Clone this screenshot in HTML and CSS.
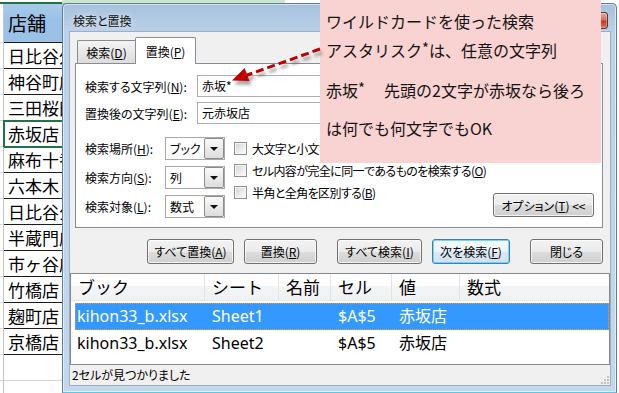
FILE: index.html
```html
<!DOCTYPE html>
<html lang="ja">
<head>
<meta charset="utf-8">
<title>検索と置換</title>
<link rel="stylesheet" href="styles.css">
</head>
<body>
<div class="sheet">
  <div class="sheet-top"><div class="st-a"></div><div class="st-b"></div></div>
  <div class="row head-row"><div class="stub"></div><div class="cell head">店舗</div></div>
  <div class="row"><div class="stub"></div><div class="cell">日比谷外堀店</div></div>
  <div class="row"><div class="stub"></div><div class="cell">神谷町店</div></div>
  <div class="row"><div class="stub"></div><div class="cell">三田桜田店</div></div>
  <div class="row"><div class="stub"></div><div class="cell sel">赤坂店</div></div>
  <div class="row"><div class="stub"></div><div class="cell">麻布十番店</div></div>
  <div class="row"><div class="stub"></div><div class="cell">六本木ヒルズ店</div></div>
  <div class="row"><div class="stub"></div><div class="cell">日比谷公園店</div></div>
  <div class="row"><div class="stub"></div><div class="cell">半蔵門店</div></div>
  <div class="row"><div class="stub"></div><div class="cell">市ヶ谷店</div></div>
  <div class="row"><div class="stub"></div><div class="cell">竹橋店</div></div>
  <div class="row"><div class="stub"></div><div class="cell">麹町店</div></div>
  <div class="row"><div class="stub"></div><div class="cell">京橋店</div></div>
  <div class="row"><div class="stub"></div><div class="cell empty"></div></div>
  <div class="row"><div class="stub"></div><div class="cell empty"></div></div>
</div>

<div class="dialog">
  <div class="titlebar"><span class="title">検索と置換</span><span class="close-btn"></span></div>
  <div class="client">
    <div class="tabs">
      <div class="tab">検索(<u>D</u>)</div>
      <div class="tab active">置換(<u>P</u>)</div>
    </div>
    <div class="panel">
      <div class="field"><span class="flabel">検索する文字列(<u>N</u>):</span><div class="input">赤坂*</div></div>
      <div class="field second"><span class="flabel">置換後の文字列(<u>E</u>):</span><div class="input">元赤坂店</div></div>
      <div class="opts">
        <div class="opt-col">
          <div class="opt-row"><span class="olabel">検索場所(<u>H</u>):</span><div class="select"><span class="sel-text">ブック</span><span class="sel-btn"><span class="tri"></span></span></div></div>
          <div class="opt-row"><span class="olabel">検索方向(<u>S</u>):</span><div class="select"><span class="sel-text">列</span><span class="sel-btn"><span class="tri"></span></span></div></div>
          <div class="opt-row"><span class="olabel">検索対象(<u>L</u>):</span><div class="select"><span class="sel-text">数式</span><span class="sel-btn"><span class="tri"></span></span></div></div>
        </div>
        <div class="chk-col">
          <div class="chk-row"><span class="chk"></span><span class="chk-label">大文字と小文字を区別する(<u>C</u>)</span></div>
          <div class="chk-row"><span class="chk"></span><span class="chk-label">セル内容が完全に同一であるものを検索する(<u>O</u>)</span></div>
          <div class="chk-row"><span class="chk"></span><span class="chk-label">半角と全角を区別する(<u>B</u>)</span></div>
        </div>
        <div class="btn opt-btn"><span>オプション(<u>T</u>) &lt;&lt;</span></div>
      </div>
    </div>
    <div class="btnrow">
      <div class="grp"><div class="btn w-repall"><span>すべて置換(<u>A</u>)</span></div><div class="btn w-rep"><span>置換(<u>R</u>)</span></div></div>
      <div class="grp"><div class="btn w-findall"><span>すべて検索(<u>I</u>)</span></div><div class="btn focus w-next"><span>次を検索(<u>F</u>)</span></div></div>
      <div class="btn w-close"><span>閉じる</span></div>
    </div>
    <div class="list">
      <div class="lv-head">
        <div class="hc">ブック</div><div class="hc">シート</div><div class="hc">名前</div><div class="hc">セル</div><div class="hc">値</div><div class="hc last">数式</div>
      </div>
      <div class="lv-row selected">
        <div class="c c1">kihon33_b.xlsx</div><div class="c">Sheet1</div><div class="c"></div><div class="c">$A$5</div><div class="c">赤坂店</div><div class="c"></div>
      </div>
      <div class="lv-row">
        <div class="c c1">kihon33_b.xlsx</div><div class="c">Sheet2</div><div class="c"></div><div class="c">$A$5</div><div class="c">赤坂店</div><div class="c"></div>
      </div>
    </div>
    <div class="status">2セルが見つかりました
      <svg class="grip" width="9" height="9" viewBox="0 0 9 9">
        <rect x="7" y="1" width="2" height="2" fill="#c2c2c2"/>
        <rect x="4" y="4" width="2" height="2" fill="#c2c2c2"/>
        <rect x="7" y="4" width="2" height="2" fill="#c2c2c2"/>
        <rect x="1" y="7" width="2" height="2" fill="#c2c2c2"/>
        <rect x="4" y="7" width="2" height="2" fill="#c2c2c2"/>
        <rect x="7" y="7" width="2" height="2" fill="#c2c2c2"/>
      </svg>
    </div>
  </div>
</div>

<div class="callout">
  <div class="cl">ワイルドカードを使った検索</div>
  <div class="cl">アスタリスク<span class="sup">*</span>は、任意の文字列</div>
  <div class="cl l3">赤坂<span class="sup">*</span><span class="gap">先頭の2文字が赤坂なら後ろ</span></div>
  <div class="cl l4">は何でも何文字でもOK</div>
</div>

<svg class="arrow" width="619" height="393" viewBox="0 0 619 393">
  <defs>
    <filter id="sh" x="-30%" y="-30%" width="160%" height="160%"><feGaussianBlur stdDeviation="1.6"/></filter>
  </defs>
  <g filter="url(#sh)" opacity="0.5" transform="translate(2,4)">
    <line x1="320" y1="49" x2="246" y2="75.5" stroke="#555" stroke-width="3" stroke-dasharray="8 4"/>
    <polygon points="232,80.5 244.6,67.9 249.4,81.1" fill="#555"/>
  </g>
  <line x1="320" y1="49" x2="246" y2="75.5" stroke="#c00000" stroke-width="3" stroke-dasharray="8 4"/>
  <polygon points="232,80.5 244.6,67.9 249.4,81.1" fill="#c00000"/>
</svg>
</body>
</html>
```

FILE: styles.css
```css
* { box-sizing: border-box; }
html, body { margin: 0; padding: 0; }
body {
  width: 619px;
  height: 393px;
  overflow: hidden;
  position: relative;
  background: #ffffff;
  font-family: "Noto Sans CJK JP", sans-serif;
  color: #000;
}

/* ---------- spreadsheet behind ---------- */
.sheet { display: flex; flex-direction: column; }
.sheet-top { display: flex; height: 4px; }
.st-a { width: 62px; border-bottom: 2px solid #217346; }
.st-b { width: 223px; background: #cbe7cb; border-bottom: 1px solid #a9a9a9; }
.row { display: flex; height: 26px; }
.row.head-row { height: 39px; }
.stub { width: 4px; border-right: 1px solid #c6c6c6; border-bottom: 1px solid #d4d4d4; }
.cell {
  width: 90px;
  border-bottom: 1px solid #1c1c1c;
  font-size: 17px;
  line-height: 25px;
  padding-left: 4px;
  white-space: nowrap;
  overflow: hidden;
}
.cell.head {
  background: linear-gradient(#a9cbea, #9bc2e6 40%, #9bc2e6);
  font-size: 19px;
  line-height: 38px;
}
.cell.sel { outline: 2px solid #217346; outline-offset: -1px; }
.cell.empty { border-bottom-color: #d4d4d4; }

/* ---------- dialog window ---------- */
.dialog {
  position: absolute;
  left: 62px;
  top: 3px;
  width: 555px;
  height: 390px;
  border: 1px solid #5f7c9c;
  border-bottom: 1px solid #5cc6e6;
  border-radius: 5px 5px 0 0;
  background: linear-gradient(#a7c1dd, #bcd2e9 30px, #bfd4ea 200px, #c4d8ec);
  box-shadow: inset 0 0 0 1px rgba(255, 255, 255, 0.55);
  padding: 0 6px 7px 7px;
  display: flex;
  flex-direction: column;
  font-feature-settings: "palt";
  font-size: 12px;
}
.titlebar {
  position: relative;
  height: 28px;
  display: flex;
  align-items: center;
  padding: 5px 0 0 3px;
}
.title { font-size: 12px; color: #111; text-shadow: 0 0 6px rgba(255,255,255,0.9); }
.close-btn {
  position: absolute;
  top: 8px;
  right: 2px;
  width: 43px;
  height: 17px;
  border: 1px solid #6b2a24;
  border-radius: 3px;
  background: linear-gradient(#e7a99c, #d4705f 45%, #c0392b 55%, #d6745f);
  box-shadow: inset 0 0 0 1px rgba(255,255,255,0.35);
}

.client {
  height: 353px;
  background: #f0f0f0;
  box-shadow: 0 0 0 1px #9aaec4;
  display: flex;
  flex-direction: column;
}

.tabs {
  display: flex;
  align-items: flex-end;
  height: 26px;
  margin-top: 5px;
  padding-left: 7px;
}
.tab {
  width: 58px;
  height: 23px;
  border: 1px solid #898c95;
  border-bottom: none;
  border-right: none;
  border-radius: 2px 0 0 0;
  background: linear-gradient(#f4f4f4, #e8e8e8 50%, #dcdcdc);
  display: flex;
  align-items: center;
  justify-content: center;
}
.tab.active {
  width: 61px;
  height: 27px;
  margin-bottom: -1px;
  border-right: 1px solid #898c95;
  border-radius: 2px 2px 0 0;
  background: #ffffff;
  position: relative;
  z-index: 2;
}

.panel {
  margin-left: 5px;
  width: 528px;
  height: 165px;
  border: 1px solid #898c95;
  background: #ffffff;
  padding: 11px 0 0 9px;
  display: flex;
  flex-direction: column;
}
.field { display: flex; align-items: center; height: 22px; }
.field.second { margin-top: 5px; }
.flabel { width: 112px; }
.input {
  width: 400px;
  height: 22px;
  border: 1px solid #abadb3;
  padding-left: 4px;
  line-height: 20px;
}

.opts { display: flex; margin-top: 13px; }
.opt-col { display: flex; flex-direction: column; gap: 6px; flex-shrink: 0; }
.opt-row { display: flex; align-items: center; height: 23px; }
.olabel { width: 80px; }
.select {
  width: 60px;
  height: 23px;
  border: 1px solid #a9a9a9;
  background: #fff;
  display: flex;
}
.sel-text { flex: 1; padding-left: 4px; line-height: 21px; }
.sel-btn {
  width: 20px;
  border: 1px solid #8c8c8c;
  border-radius: 2px;
  background: linear-gradient(#fafafa, #ebebeb 50%, #dddddd);
  display: flex;
  align-items: center;
  justify-content: center;
}
.tri {
  width: 0;
  height: 0;
  border-left: 4px solid transparent;
  border-right: 4px solid transparent;
  border-top: 4px solid #111;
}
.chk-col { display: flex; flex-direction: column; margin-left: 9px; min-width: 0; }
.chk-row { display: flex; align-items: center; height: 22px; gap: 5px; white-space: nowrap; }
.chk-label { letter-spacing: -0.6px; }
.chk {
  width: 13px;
  height: 13px;
  flex-shrink: 0;
  border: 1px solid #8e8f8f;
  background: linear-gradient(135deg, #d2d2d2, #f2f2f2 70%, #fbfbfb);
  box-shadow: inset 0 0 0 1px #f6f6f6;
}

.btn {
  height: 25px;
  border: 1px solid #707070;
  border-radius: 3px;
  background: linear-gradient(#f2f2f2, #ebebeb 50%, #dddddd 50%, #cfcfcf);
  box-shadow: inset 0 0 0 1px rgba(255, 255, 255, 0.75);
  display: flex;
  align-items: center;
  justify-content: center;
  white-space: nowrap;
  flex-shrink: 0;
}
.btn.focus {
  border-color: #3c7fb1;
  box-shadow: inset 0 0 0 1px #6fd6f6;
  background: linear-gradient(#f6fafd, #eaf3fa 50%, #dbe9f4 50%, #cfe1ef);
}
.opt-btn {
  width: 101px;
  height: 24px;
  margin-left: auto;
  margin-right: 8px;
  align-self: flex-end;
  margin-bottom: 1px;
}
.btnrow { display: flex; gap: 20px; margin-top: 11px; padding-left: 77px; }
.grp { display: flex; gap: 10px; }
.w-repall { width: 87px; }
.w-rep { width: 73px; }
.w-findall { width: 85px; }
.w-next { width: 78px; }
.w-close { width: 73px; }

/* ---------- results list ---------- */
.list {
  margin-top: 9px;
  height: 92px;
  border: 1px solid #828790;
  background: #ffffff;
  display: flex;
  flex-direction: column;
}
.lv-head {
  display: grid;
  grid-template-columns: 134px 74px 52px 61px 68px 1fr;
  height: 27px;
  background: linear-gradient(#ffffff, #ffffff 45%, #f3f4f6 45%, #f1f2f4);
  border-bottom: 1px solid #e3e5e8;
}
.hc {
  border-right: 1px solid #e1e3e6;
  padding-left: 7px;
  font-size: 17px;
  line-height: 26px;
  font-feature-settings: normal;
}
.hc.last { border-right: none; }
.lv-row {
  display: grid;
  grid-template-columns: 130px 74px 52px 61px 68px 1fr;
  height: 27px;
  margin-left: 4px;
  font-family: "Noto Sans", "Noto Sans CJK JP", sans-serif;
  font-size: 16px;
  line-height: 27px;
}
.lv-row.selected {
  margin-top: 2px;
  background: #3399ff;
  color: #ffffff;
  outline: 1px dotted #e59a3c;
  outline-offset: -1px;
}
.c { padding-left: 7px; white-space: nowrap; }
.c.c1 { padding-left: 2px; }

.status {
  position: relative;
  height: 20px;
  line-height: 20px;
  padding-left: 2px;
  font-size: 12px;
}
.grip { position: absolute; right: 1px; bottom: 1px; }

/* ---------- annotation ---------- */
.callout {
  position: absolute;
  left: 320px;
  top: 0;
  width: 281px;
  height: 163px;
  background: #f9d2d2;
  padding: 7px 0 0 6px;
  font-size: 16px;
  line-height: 29px;
  color: #141414;
  white-space: nowrap;
}
.cl.l3 { margin-top: 11px; }
.cl.l4 { margin-top: 9px; }
.sup { font-size: 15px; vertical-align: 3px; line-height: 0; }
.gap { margin-left: 19px; }

.arrow { position: absolute; left: 0; top: 0; pointer-events: none; }
```
